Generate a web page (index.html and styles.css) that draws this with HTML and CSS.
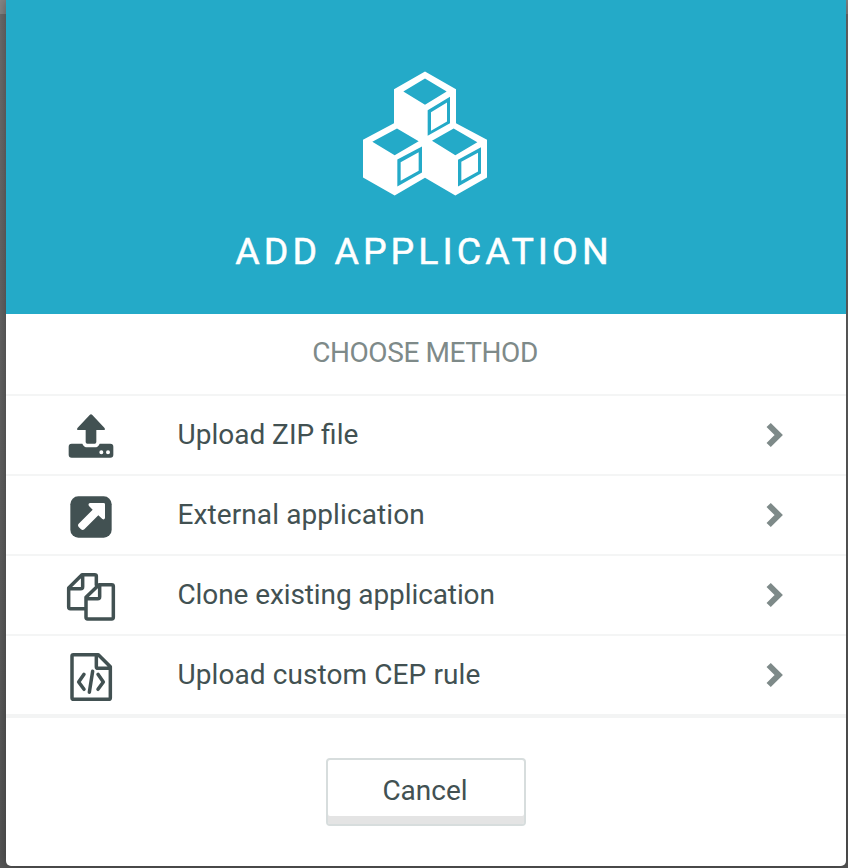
FILE: index.html
```html
<!DOCTYPE html>
<html lang="en">
<head>
<meta charset="utf-8">
<title>Add application</title>
<link rel="stylesheet" href="styles.css">
</head>
<body>
<main class="modal">
  <header class="modal-header">
    <svg class="cubes" viewBox="39 35 372 372" aria-hidden="true">
      <path class="face" d="M225 35L318 88V190L411 240V353L316 407L225 354L134 407L39 353V240L132 190V88Z"/>
      <path class="cut" d="M225 56L290 95L225 135L160 95ZM141 206L206 244L134 286L67 246ZM311 206L382 247L316 286L246 243Z"/>
      <path class="cut" fill-rule="evenodd" d="M233 151L300 111V190L233 228ZM243 157V213L291 185V128ZM142 299L216 260V338L142 380ZM152 307V363L206 333V277ZM324 300L393 262V341L324 380ZM334 306V363L384 335V279Z"/>
    </svg>
    <h1>ADD APPLICATION</h1>
  </header>
  <h2>CHOOSE METHOD</h2>
  <ul class="methods">
    <li>
      <svg class="icon" viewBox="0 0 240 222" aria-hidden="true">
        <path class="solid" d="M119 45Q123 41 127 45L163 83Q168 90 160 90H139V126Q139 131 134 131H112Q107 131 107 126V90H86Q78 90 83 83Z"/>
        <path class="solid" fill-rule="evenodd" d="M65 131H97Q101 142 113 142H134Q145 142 149 131H181Q190 131 190 140V164Q190 173 181 173H65Q56 173 56 164V140Q56 131 65 131ZM148 157a6 6 0 1 0 12 0a6 6 0 1 0-12 0ZM168 157a6 6 0 1 0 12 0a6 6 0 1 0-12 0Z"/>
      </svg>
      <span class="label zip">Upload ZIP file</span>
      <svg class="chevron" viewBox="0 0 51 78" aria-hidden="true"><path d="M8 9L38 39L8 69"/></svg>
    </li>
    <li>
      <svg class="icon" viewBox="0 0 240 222" aria-hidden="true">
        <rect class="solid" x="61" y="49" width="124" height="124" rx="24"/>
        <path class="arrow" d="M120 69H161Q165 69 165 73V114Q163 121 157 117L145 106L103 148Q98 152 93 148L86 141Q82 136 86 131L128 89L117 78Q113 71 120 69Z"/>
      </svg>
      <span class="label external">External application</span>
      <svg class="chevron" viewBox="0 0 51 78" aria-hidden="true"><path d="M8 9L38 39L8 69"/></svg>
    </li>
    <li>
      <svg class="icon" viewBox="0 0 240 222" aria-hidden="true">
        <path class="line" d="M105 146H61Q56 146 56 141V84L96 44H134Q139 44 139 48V75M98 45V80Q98 86 92 86H58"/>
        <path class="line" d="M147 74H185Q190 74 190 79V172Q190 177 185 177H113Q108 177 108 172V112ZM149 76V110Q149 116 143 116H110"/>
      </svg>
      <span class="label clone">Clone existing application</span>
      <svg class="chevron" viewBox="0 0 51 78" aria-hidden="true"><path d="M8 9L38 39L8 69"/></svg>
    </li>
    <li>
      <svg class="icon" viewBox="0 0 240 222" aria-hidden="true">
        <path class="line" d="M70 44H145L181 80V173Q181 178 176 178H71Q66 178 66 173V48Q66 44 70 44ZM139 45V80Q139 85 144 85H180"/>
        <path class="line" d="M102 103L86 126L102 148M144 103L160 126L144 148M128 94L118 157"/>
      </svg>
      <span class="label rule">Upload custom CEP rule</span>
      <svg class="chevron" viewBox="0 0 51 78" aria-hidden="true"><path d="M8 9L38 39L8 69"/></svg>
    </li>
  </ul>
  <footer class="modal-footer">
    <button type="button">Cancel</button>
  </footer>
</main>
</body>
</html>
```
FILE: styles.css
```css
* { box-sizing: border-box; }
body {
  margin: 0;
  height: 868px;
  padding: 0 2px 2px 6px;
  overflow: hidden;
  background: linear-gradient(#858585 0 14px, #6c6c6c 14px, #555 100%);
  font-family: Roboto, "Liberation Sans", sans-serif;
  color: #425152;
}
.modal {
  height: 866px;
  background: #fff;
  border-radius: 0 0 5px 5px;
  overflow: hidden;
  box-shadow: 0 0 12px rgba(0, 0, 0, .35);
}
.modal-header {
  height: 314px;
  padding-top: 71px;
  background: #24aac8;
  color: #fff;
  display: flex;
  flex-direction: column;
  align-items: center;
}
.cubes { width: 124px; height: 125px; margin-right: 2px; }
.face { fill: #fff; }
.cut { fill: #24aac8; }
h1 {
  margin: 33px 4px 0 0;
  font-size: 37.5px;
  line-height: 44px;
  font-weight: 400;
  letter-spacing: 4.05px;
  -webkit-text-stroke: .5px #fff;
  white-space: nowrap;
}
h2 {
  height: 80px;
  margin: 0;
  padding: 22px 2px 0 0;
  font-size: 28px;
  line-height: 33px;
  font-weight: 400;
  letter-spacing: -.42px;
  text-align: center;
  color: #7e8a89;
}
.methods {
  margin: 0;
  padding: 0;
  list-style: none;
  border-bottom: 4px solid #f3f4f4;
}
.methods li {
  height: 80px;
  border-top: 2px solid #f4f5f5;
  padding: 4px 63px 0 44px;
  display: flex;
  align-items: flex-start;
}
.icon { width: 80px; height: 74px; flex: none; }
.solid { fill: #425152; }
.arrow { fill: #fff; }
.line {
  fill: none;
  stroke: #425152;
  stroke-width: 10.5;
  stroke-linecap: round;
  stroke-linejoin: round;
}
.label {
  flex: 1;
  margin-left: 47.5px;
  padding-top: 18px;
  font-size: 28px;
  line-height: 33px;
  white-space: nowrap;
}
.external { letter-spacing: .1px; }
.clone { letter-spacing: -.1px; }
.rule { letter-spacing: .09px; }
.chevron { width: 17px; height: 26px; margin-top: 22px; flex: none; }
.chevron path { fill: none; stroke: #7e8a89; stroke-width: 18; }
.modal-footer { padding-top: 40px; display: flex; justify-content: center; }
button {
  width: 200px;
  height: 68px;
  padding: 0 2px 3px 0;
  border: 2px solid #d7dddd;
  border-radius: 4px;
  background: #fff;
  box-shadow: inset 0 -8px #e4e4e4;
  font: 28px/33px Roboto, "Liberation Sans", sans-serif;
  color: #425152;
}
```
